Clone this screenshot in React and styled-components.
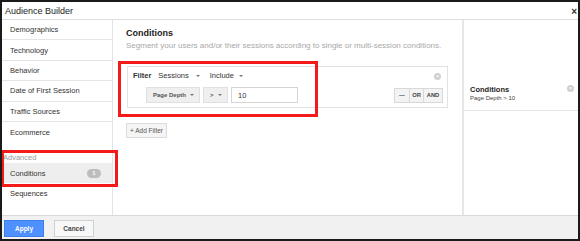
import styled, { createGlobalStyle } from "styled-components";

const Global = createGlobalStyle`
  html, body { margin: 0; padding: 0; background: #fff; }
  body { font-family: "Liberation Sans", Arial, sans-serif; color: #333; }
  * { box-sizing: border-box; }
`;

const Frame = styled.div`
  position: relative;
  width: 580px;
  height: 241px;
  border: 2px solid #1a1a1a;
  display: flex;
  flex-direction: column;
  overflow: hidden;
`;

const Header = styled.div`
  height: 18px;
  border-bottom: 1px solid #ddd;
  display: flex;
  align-items: center;
  justify-content: space-between;
  padding: 0 1px 0 3px;
  font-size: 9px;
  color: #222;
`;

const Close = styled.span`
  font-size: 10px;
  font-weight: bold;
  color: #333;
  margin-top: 2px;
`;

const Body = styled.div`
  flex: 1;
  display: flex;
  min-height: 0;
`;

const Sidebar = styled.div`
  width: 111px;
  border-right: 1px solid #e3e3e3;
  display: flex;
  flex-direction: column;
`;

const NavItem = styled.div`
  height: ${(p) => (p.$tight ? "20px" : "20.4px")};
  display: flex;
  align-items: center;
  justify-content: space-between;
  padding: 0 11px 0 8px;
  font-size: 7.5px;
  color: #333;
  background: ${(p) => (p.$active ? "#eeeeee" : "transparent")};
  border-bottom: ${(p) => (p.$line ? "1px solid #e5e5e5" : "none")};
`;

const SectionLabel = styled.div`
  margin-top: 11px;
  padding-left: 1px;
  font-size: 7.5px;
  line-height: 10px;
  color: #9a9a9a;
`;

const Badge = styled.span`
  background: #bdbdbd;
  color: #fff;
  font-size: 6px;
  font-weight: bold;
  border-radius: 5px;
  width: 14px;
  height: 9px;
  display: flex;
  align-items: center;
  justify-content: center;
`;

const Main = styled.div`
  flex: 1;
  padding: 8px 13px 0 13px;
`;

const Title = styled.div`
  font-size: 9px;
  line-height: 11px;
  font-weight: bold;
  color: #222;
`;

const Subtitle = styled.div`
  margin-top: 2px;
  font-size: 8px;
  line-height: 10px;
  color: #a8a8a8;
  white-space: nowrap;
`;

const FilterBox = styled.div`
  margin: 15px 1px 0 1px;
  border: 1px solid #e2e2e2;
  padding: 4px 4px 4px 5px;
`;

const Row = styled.div`
  display: flex;
  align-items: center;
  margin-top: ${(p) => p.$mt || 0}px;
  padding-left: ${(p) => p.$indent || 0}px;
`;

const Label = styled.span`
  font-size: 7.5px;
  line-height: 10px;
  font-weight: ${(p) => (p.$bold ? "bold" : "normal")};
  color: #333;
  margin-right: ${(p) => p.$mr || 0}px;
  display: flex;
  align-items: center;
`;

const Caret = styled.span`
  display: inline-block;
  width: 0;
  height: 0;
  border-left: 2px solid transparent;
  border-right: 2px solid transparent;
  border-top: 2px solid #777;
  margin-left: ${(p) => p.$ml || 6}px;
`;

const Spacer = styled.div`
  flex: 1;
`;

const ClearDot = styled.span`
  width: 7px;
  height: 7px;
  border-radius: 50%;
  background: #d0d0d0;
  color: #fff;
  font-size: 6px;
  line-height: 7px;
  text-align: center;
  margin-right: ${(p) => p.$mr || 0}px;
`;

const SelectBtn = styled.div`
  width: ${(p) => p.$w}px;
  height: 16px;
  margin-right: 3px;
  background: #efefef;
  border: 1px solid #e0e0e0;
  display: flex;
  align-items: center;
  justify-content: space-between;
  padding: 0 5px 0 6px;
  font-size: 6px;
  font-weight: bold;
  color: #555;
`;

const Input = styled.div`
  width: 67px;
  height: 16px;
  border: 1px solid #d5d5d5;
  background: #fff;
  display: flex;
  align-items: center;
  padding-left: 6px;
  font-size: 7.5px;
  color: #333;
`;

const BtnGroup = styled.div`
  display: flex;
  border: 1px solid #d8d8d8;
  background: #f3f3f3;
  height: 15px;
`;

const GroupBtn = styled.div`
  width: ${(p) => p.$w}px;
  display: flex;
  align-items: center;
  justify-content: center;
  font-size: 5.8px;
  font-weight: bold;
  color: #444;
  border-left: ${(p) => (p.$first ? "none" : "1px solid #d8d8d8")};
`;

const AddFilter = styled.div`
  margin-top: 15px;
  width: 41px;
  height: 15px;
  border: 1px solid #dcdcdc;
  background: #f5f5f5;
  display: flex;
  align-items: center;
  justify-content: center;
  font-size: 6.5px;
  color: #555;
`;

const Summary = styled.div`
  width: 116px;
  border-left: 2px solid #e6e6e6;
  padding-top: 63px;
`;

const SummaryItem = styled.div`
  border-bottom: 1px solid #e6e6e6;
  padding: 2px 4px 8px 6px;
  display: flex;
  align-items: flex-start;
  justify-content: space-between;
`;

const SummaryTitle = styled.div`
  font-size: 7.5px;
  font-weight: bold;
  color: #222;
  line-height: 9px;
`;

const SummaryText = styled.div`
  font-size: 6px;
  color: #444;
  line-height: 8px;
`;

const Footer = styled.div`
  height: 24px;
  border-top: 1px solid #dadada;
  background: #f1f1f1;
  display: flex;
  align-items: center;
  padding: 1px 0 0 2px;
  gap: 10px;
`;

const Button = styled.div`
  width: 40px;
  height: 17px;
  display: flex;
  align-items: center;
  justify-content: center;
  font-size: 6.5px;
  font-weight: bold;
  color: ${(p) => (p.$primary ? "#fff" : "#444")};
  background: ${(p) => (p.$primary ? "#4d90fe" : "#f8f8f8")};
  border: 1px solid ${(p) => (p.$primary ? "#3d7fe6" : "#d0d0d0")};
`;

const Highlight = styled.div`
  position: absolute;
  left: ${(p) => p.$x}px;
  top: ${(p) => p.$y}px;
  width: ${(p) => p.$w}px;
  height: ${(p) => p.$h}px;
  border: 3px solid #f41a1a;
  pointer-events: none;
`;

const navItems = [
  "Demographics",
  "Technology",
  "Behavior",
  "Date of First Session",
  "Traffic Sources",
];

export default function App() {
  return (
    <>
      <Global />
      <Frame>
        <Header>
          <span>Audience Builder</span>
          <Close>×</Close>
        </Header>
        <Body>
          <Sidebar>
            {navItems.map((n) => (
              <NavItem key={n} $line>
                {n}
              </NavItem>
            ))}
            <NavItem>Ecommerce</NavItem>
            <SectionLabel>Advanced</SectionLabel>
            <NavItem $active $tight>
              Conditions
              <Badge>1</Badge>
            </NavItem>
            <NavItem $tight>Sequences</NavItem>
          </Sidebar>
          <Main>
            <Title>Conditions</Title>
            <Subtitle>
              Segment your users and/or their sessions according to single or
              multi-session conditions.
            </Subtitle>
            <FilterBox>
              <Row>
                <Label $bold $mr={7}>Filter</Label>
                <Label $mr={10}>
                  Sessions <Caret $ml={7} />
                </Label>
                <Label>
                  Include <Caret $ml={5} />
                </Label>
                <Spacer />
                <ClearDot $mr={2}>×</ClearDot>
              </Row>
              <Row $mt={6} $indent={13}>
                <SelectBtn $w={54}>
                  Page Depth <Caret $ml={4} />
                </SelectBtn>
                <SelectBtn $w={25}>
                  &gt; <Caret $ml={4} />
                </SelectBtn>
                <Input>10</Input>
                <Spacer />
                <BtnGroup>
                  <GroupBtn $w={14} $first>—</GroupBtn>
                  <GroupBtn $w={14}>OR</GroupBtn>
                  <GroupBtn $w={19}>AND</GroupBtn>
                </BtnGroup>
              </Row>
            </FilterBox>
            <AddFilter>+ Add Filter</AddFilter>
          </Main>
          <Summary>
            <SummaryItem>
              <div>
                <SummaryTitle>Conditions</SummaryTitle>
                <SummaryText>Page Depth &gt; 10</SummaryText>
              </div>
              <ClearDot>×</ClearDot>
            </SummaryItem>
          </Summary>
        </Body>
        <Footer>
          <Button $primary>Apply</Button>
          <Button>Cancel</Button>
        </Footer>
        <Highlight $x={116} $y={59} $w={200} $h={56} />
        <Highlight $x={-1} $y={148} $w={117} $h={37} />
      </Frame>
    </>
  );
}
